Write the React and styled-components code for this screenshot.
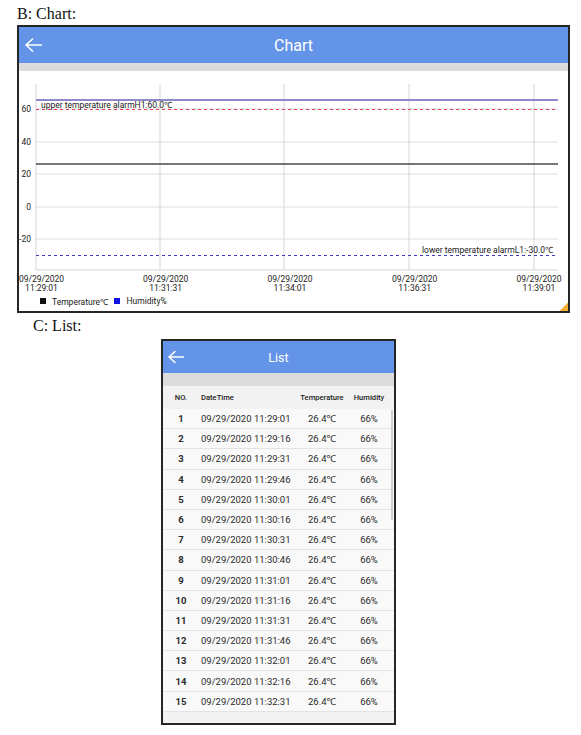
import React from "react";
import styled, { createGlobalStyle } from "styled-components";

const GlobalStyle = createGlobalStyle`
  html, body {
    margin: 0;
    padding: 0;
    background: #fff;
  }
  body {
    font-family: "Liberation Serif", "Times New Roman", serif;
  }
`;

const Page = styled.div`
  width: 581px;
  height: 735px;
  padding-top: 5px;
  box-sizing: border-box;
  overflow: hidden;
`;

const Caption = styled.div`
  font-family: "Liberation Serif", serif;
  font-size: 16px;
  line-height: 18px;
  color: #111;
  margin-left: ${(p) => p.$left}px;
  margin-top: ${(p) => p.$top || 0}px;
`;

const Screen = styled.div`
  position: relative;
  box-sizing: border-box;
  width: ${(p) => p.$width}px;
  height: ${(p) => p.$height}px;
  margin-left: ${(p) => p.$left}px;
  margin-top: ${(p) => p.$top}px;
  border: 2px solid #262626;
  background: #fff;
  display: flex;
  flex-direction: column;
  font-family: Roboto, "Noto Sans", sans-serif;
  overflow: hidden;
`;

const AppBar = styled.div`
  position: relative;
  height: ${(p) => p.$height}px;
  flex: none;
  background: #6494e7;
  display: flex;
  align-items: center;
  justify-content: center;
  color: #fff;
  font-size: ${(p) => p.$size}px;
`;

const BackButton = styled.div`
  position: absolute;
  left: ${(p) => p.$left}px;
  top: 50%;
  transform: translateY(-50%);
  display: flex;
`;

const Band = styled.div`
  height: ${(p) => p.$height}px;
  flex: none;
  background: #dcdcdc;
`;

const Legend = styled.div`
  display: flex;
  align-items: center;
  gap: 6px;
  padding-left: 21px;
  height: 12px;
  font-size: 8.5px;
  color: #1a1a1a;
`;

const LegendItem = styled.div`
  display: flex;
  align-items: center;
  gap: 6px;
`;

const Swatch = styled.span`
  width: 6px;
  height: 6px;
  background: ${(p) => p.$color};
`;

const Corner = styled.div`
  position: absolute;
  right: 0;
  bottom: 0;
  width: 8px;
  height: 8px;
  background: linear-gradient(135deg, transparent 50%, #f3b233 50%);
`;

const ListBody = styled.div`
  position: relative;
  flex: 1;
  background: #f3f3f3;
  display: flex;
  flex-direction: column;
`;

const Row = styled.div`
  display: grid;
  grid-template-columns: 36px 98px 50px 1fr;
  align-items: center;
  height: ${(p) => (p.$head ? 23 : 20.2)}px;
  box-sizing: border-box;
  background: ${(p) => (p.$head ? "#f2f2f2" : "#f9f9f9")};
  border-bottom: 1px solid ${(p) => (p.$head ? "transparent" : "#e3e3e3")};
  font-size: ${(p) => (p.$head ? 7.6 : 9.5)}px;
  font-weight: ${(p) => (p.$head ? 500 : 400)};
  color: ${(p) => (p.$head ? "#222" : "#2a2a2a")};
  padding-right: 3px;
`;

const Cell = styled.div`
  text-align: ${(p) => p.$align || "center"};
  padding-left: ${(p) => (p.$align === "left" ? 2 : 0)}px;
  font-weight: ${(p) => (p.$bold ? 700 : "inherit")};
  white-space: nowrap;
`;

const Scrollbar = styled.div`
  position: absolute;
  right: 1px;
  top: 24px;
  width: 2px;
  height: 110px;
  background: #cdcdcd;
`;

const Arrow = ({ w, h }) => (
  <svg width={w} height={h} viewBox={`0 0 ${w} ${h}`} fill="none">
    <path
      d={`M1 ${h / 2} H${w - 0.5} M${h / 2 + 0.5} 1 L1 ${h / 2} L${h / 2 + 0.5} ${h - 1}`}
      stroke="#fff"
      strokeWidth="1.6"
      strokeLinecap="round"
      strokeLinejoin="round"
    />
  </svg>
);

const plot = { left: 17, right: 539, top: 13, bottom: 199 };
const hGrid = [38, 71, 103, 136, 168];
const vGrid = [17, 141, 265, 390, 515];
const yLabels = [
  ["60", 38],
  ["40", 71],
  ["20", 103],
  ["0", 136],
  ["-20", 168],
];
const xLabels = [
  [22.5, "11:29:01"],
  [146.7, "11:31:31"],
  [271, "11:34:01"],
  [395.7, "11:36:31"],
  [520, "11:39:01"],
];

const ChartSvg = () => (
  <svg width="549" height="224" style={{ display: "block" }} fontFamily="Roboto, sans-serif">
    {hGrid.map((y) => (
      <line key={y} x1={plot.left} x2={plot.right} y1={y} y2={y} stroke="#dedede" strokeWidth="1" />
    ))}
    {vGrid.map((x) => (
      <line key={x} x1={x} x2={x} y1={plot.top} y2={plot.bottom} stroke="#d6d6d6" strokeWidth="1" />
    ))}
    <line x1={plot.left} x2={plot.right} y1={plot.bottom} y2={plot.bottom} stroke="#d6d6d6" />
    <line x1={plot.left} x2={plot.right} y1="29" y2="29" stroke="#8e8ac9" strokeWidth="2" />
    <line x1={plot.left} x2={plot.right} y1="38.5" y2="38.5" stroke="#e5404e" strokeWidth="1.2" strokeDasharray="3 3" />
    <line x1={plot.left} x2={plot.right} y1="93" y2="93" stroke="#4a4a4a" strokeWidth="1.5" />
    <line x1={plot.left} x2={plot.right} y1="184.5" y2="184.5" stroke="#3b3bc0" strokeWidth="1.2" strokeDasharray="3 3" />
    {yLabels.map(([t, y]) => (
      <text key={t} x="12" y={y + 3} fontSize="8.5" textAnchor="end" fill="#222">
        {t}
      </text>
    ))}
    <text x="22" y="36.5" fontSize="8.5" fill="#1a1a1a">
      upper temperature alarmH1:60.0℃
    </text>
    <text x="534" y="182" fontSize="8.5" fill="#1a1a1a" textAnchor="end">
      lower temperature alarmL1:-30.0℃
    </text>
    {xLabels.map(([x, time]) => (
      <g key={time} fontSize="8.5" fill="#222" textAnchor="middle">
        <text x={x} y="211">09/29/2020</text>
        <text x={x} y="220">{time}</text>
      </g>
    ))}
  </svg>
);

const rows = Array.from({ length: 15 }, (_, i) => {
  const secs = 29 * 60 + 1 + i * 15;
  const m = Math.floor(secs / 60);
  const s = secs % 60;
  return {
    no: i + 1,
    time: `09/29/2020 11:${String(m).padStart(2, "0")}:${String(s).padStart(2, "0")}`,
  };
});

const App = () => (
  <Page>
    <GlobalStyle />
    <Caption $left={17}>B: Chart:</Caption>
    <Screen $left={17} $top={2} $width={553} $height={288}>
      <AppBar $height={36} $size={16}>
        <BackButton $left={6}>
          <Arrow w={17} h={14} />
        </BackButton>
        Chart
      </AppBar>
      <Band $height={8} />
      <ChartSvg />
      <Legend>
        <LegendItem>
          <Swatch $color="#111" />
          Temperature℃
        </LegendItem>
        <LegendItem>
          <Swatch $color="#1010e0" />
          Humidity%
        </LegendItem>
      </Legend>
      <Corner />
    </Screen>
    <Caption $left={33} $top={4}>C: List:</Caption>
    <Screen $left={161} $top={4} $width={235} $height={386}>
      <AppBar $height={32} $size={12.5}>
        <BackButton $left={5}>
          <Arrow w={16} h={13} />
        </BackButton>
        List
      </AppBar>
      <Band $height={13} />
      <ListBody>
        <Row $head>
          <Cell>NO.</Cell>
          <Cell $align="left">DateTime</Cell>
          <Cell>Temperature</Cell>
          <Cell>Humidity</Cell>
        </Row>
        {rows.map((r) => (
          <Row key={r.no}>
            <Cell $bold>{r.no}</Cell>
            <Cell $align="left">{r.time}</Cell>
            <Cell>26.4℃</Cell>
            <Cell>66%</Cell>
          </Row>
        ))}
        <Scrollbar />
      </ListBody>
    </Screen>
  </Page>
);

export default App;
